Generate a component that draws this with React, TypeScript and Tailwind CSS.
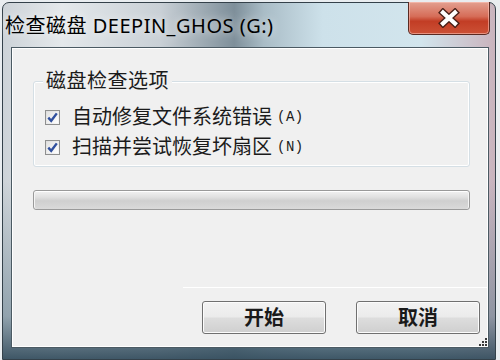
import React from 'react'

const cjk = "font-['Noto_Sans','Noto_Sans_CJK_SC',sans-serif]"

function CheckBox() {
  return (
    <div className="w-[15px] h-[15px] border border-[#8e8f8f] bg-[linear-gradient(135deg,#dcdcdc,#f7f7f7)] p-px shrink-0">
      <div className="w-full h-full bg-[linear-gradient(135deg,#e2e2e2,#ffffff)] flex items-center justify-center">
        <svg width="11" height="11" viewBox="0 0 11 11">
          <path d="M1.3 5.6 L4.2 8.8 L9.8 1.4" fill="none" stroke="#2f4f9e" strokeWidth="2.4" />
        </svg>
      </div>
    </div>
  )
}

function Option({ label, hot }: { label: string; hot: string }) {
  return (
    <div className="flex items-center h-[20px]">
      <CheckBox />
      <span className={`ml-[12px] text-[20px] leading-[20px] text-[#1b1b1b] ${cjk}`}>{label}</span>
      <span className="ml-[5px] text-[14px] leading-[20px] tracking-[0.5px] text-[#1b1b1b] font-['Liberation_Mono',monospace]">({hot})</span>
    </div>
  )
}

function Button({ children }: { children: React.ReactNode }) {
  return (
    <button className="w-[124px] h-[33px] rounded-[3px] border border-[#707070] shadow-[inset_0_0_0_1px_#fcfcfc] bg-[linear-gradient(to_bottom,#f3f3f3_0%,#ebebeb_48%,#dddddd_52%,#cfcfcf_100%)] flex items-center justify-center">
      <span className={`text-[20px] leading-[20px] font-semibold text-[#1a1a1a] ${cjk}`}>{children}</span>
    </button>
  )
}

export default function App() {
  return (
    <div className="w-[500px] h-[360px] overflow-hidden bg-[#e9edf0]">
      <div className="ml-[2px] mt-[2px] w-[494px] h-[358px] rounded-t-[7px] border border-[#34414a] flex flex-col bg-[linear-gradient(to_bottom,rgba(0,0,0,0)_0%,rgba(0,0,0,0)_50%,rgba(95,122,138,0.55)_88%,rgba(55,80,96,0.95)_100%),linear-gradient(to_right,#cdd3d8_0%,#e4e8eb_12%,#c9d0d6_32%,#7e8f9a_47%,#a9bcc6_53%,#cde1ea_65%,#d2e5ed_85%,#c9b3bd_100%)]">
        <div className="h-[44px] flex items-start justify-between">
          <div className={`pl-[2px] pt-[11px] text-[20px] leading-[24px] text-black tracking-[0.5px] [text-shadow:0_0_8px_rgba(255,255,255,0.9)] ${cjk}`}>
            检查磁盘 DEEPIN_GHOS (G:)
          </div>
          <div className="-mt-px mr-[5px] w-[82px] h-[33px] rounded-b-[5px] border border-t-0 border-[#5a2a22] shadow-[inset_0_0_0_1px_rgba(255,200,190,0.55)] bg-[linear-gradient(to_bottom,#e3a090_0%,#d66d58_45%,#c23d25_60%,#cc5136_100%)] flex items-center justify-center">
            <svg width="26" height="20" viewBox="0 0 26 20">
              <path d="M7 4.5 L19 15.5 M19 4.5 L7 15.5" fill="none" stroke="#4a2018" strokeWidth="7" strokeLinecap="square" />
              <path d="M7 4.5 L19 15.5 M19 4.5 L7 15.5" fill="none" stroke="#ffffff" strokeWidth="4.2" strokeLinecap="square" />
            </svg>
          </div>
        </div>

        <div className="ml-[8px] w-[478px] h-[301px] border border-[#4b5a63] bg-[#f0f0f0] shadow-[inset_0_0_0_1px_#ffffff] flex flex-col relative">
          <div className="ml-[21px] mt-[33px] w-[437px] h-[86px] rounded-[3px] border border-[#d5dfe5] shadow-[inset_0_0_0_1px_#ffffff] relative">
            <div className={`absolute left-[9px] -top-[12px] px-[3px] bg-[#f0f0f0] text-[20px] leading-[22px] tracking-[0.5px] text-[#1b1b1b] ${cjk}`}>
              磁盘检查选项
            </div>
            <div className="pl-[11px] pt-[25px] flex flex-col gap-[10px]">
              <Option label="自动修复文件系统错误" hot="A" />
              <Option label="扫描并尝试恢复坏扇区" hot="N" />
            </div>
          </div>

          <div className="ml-[21px] mt-[23px] w-[437px] h-[20px] rounded-[3px] border border-[#9a9a9a] shadow-[inset_0_1px_0_#ffffff,inset_1px_0_0_#f4f4f4,inset_-1px_0_0_#f4f4f4] bg-[linear-gradient(to_bottom,#f2f2f2_0%,#e0e0e0_35%,#cfcfcf_55%,#dadada_100%)]" />

          <div className="mt-[77px] ml-[171px] h-px w-[305px] bg-white" />

          <div className="mt-[13px] flex justify-end gap-[30px] pr-[8px]">
            <Button>开始</Button>
            <Button>取消</Button>
          </div>

          <svg className="absolute right-[1px] bottom-[1px]" width="8" height="8" viewBox="0 0 8 8">
            <rect x="6" y="0" width="2" height="2" fill="#3a3a3a" />
            <rect x="3" y="3" width="2" height="2" fill="#3a3a3a" />
            <rect x="6" y="3" width="2" height="2" fill="#3a3a3a" />
            <rect x="0" y="6" width="2" height="2" fill="#3a3a3a" />
            <rect x="3" y="6" width="2" height="2" fill="#3a3a3a" />
            <rect x="6" y="6" width="2" height="2" fill="#3a3a3a" />
          </svg>
        </div>
      </div>
    </div>
  )
}
